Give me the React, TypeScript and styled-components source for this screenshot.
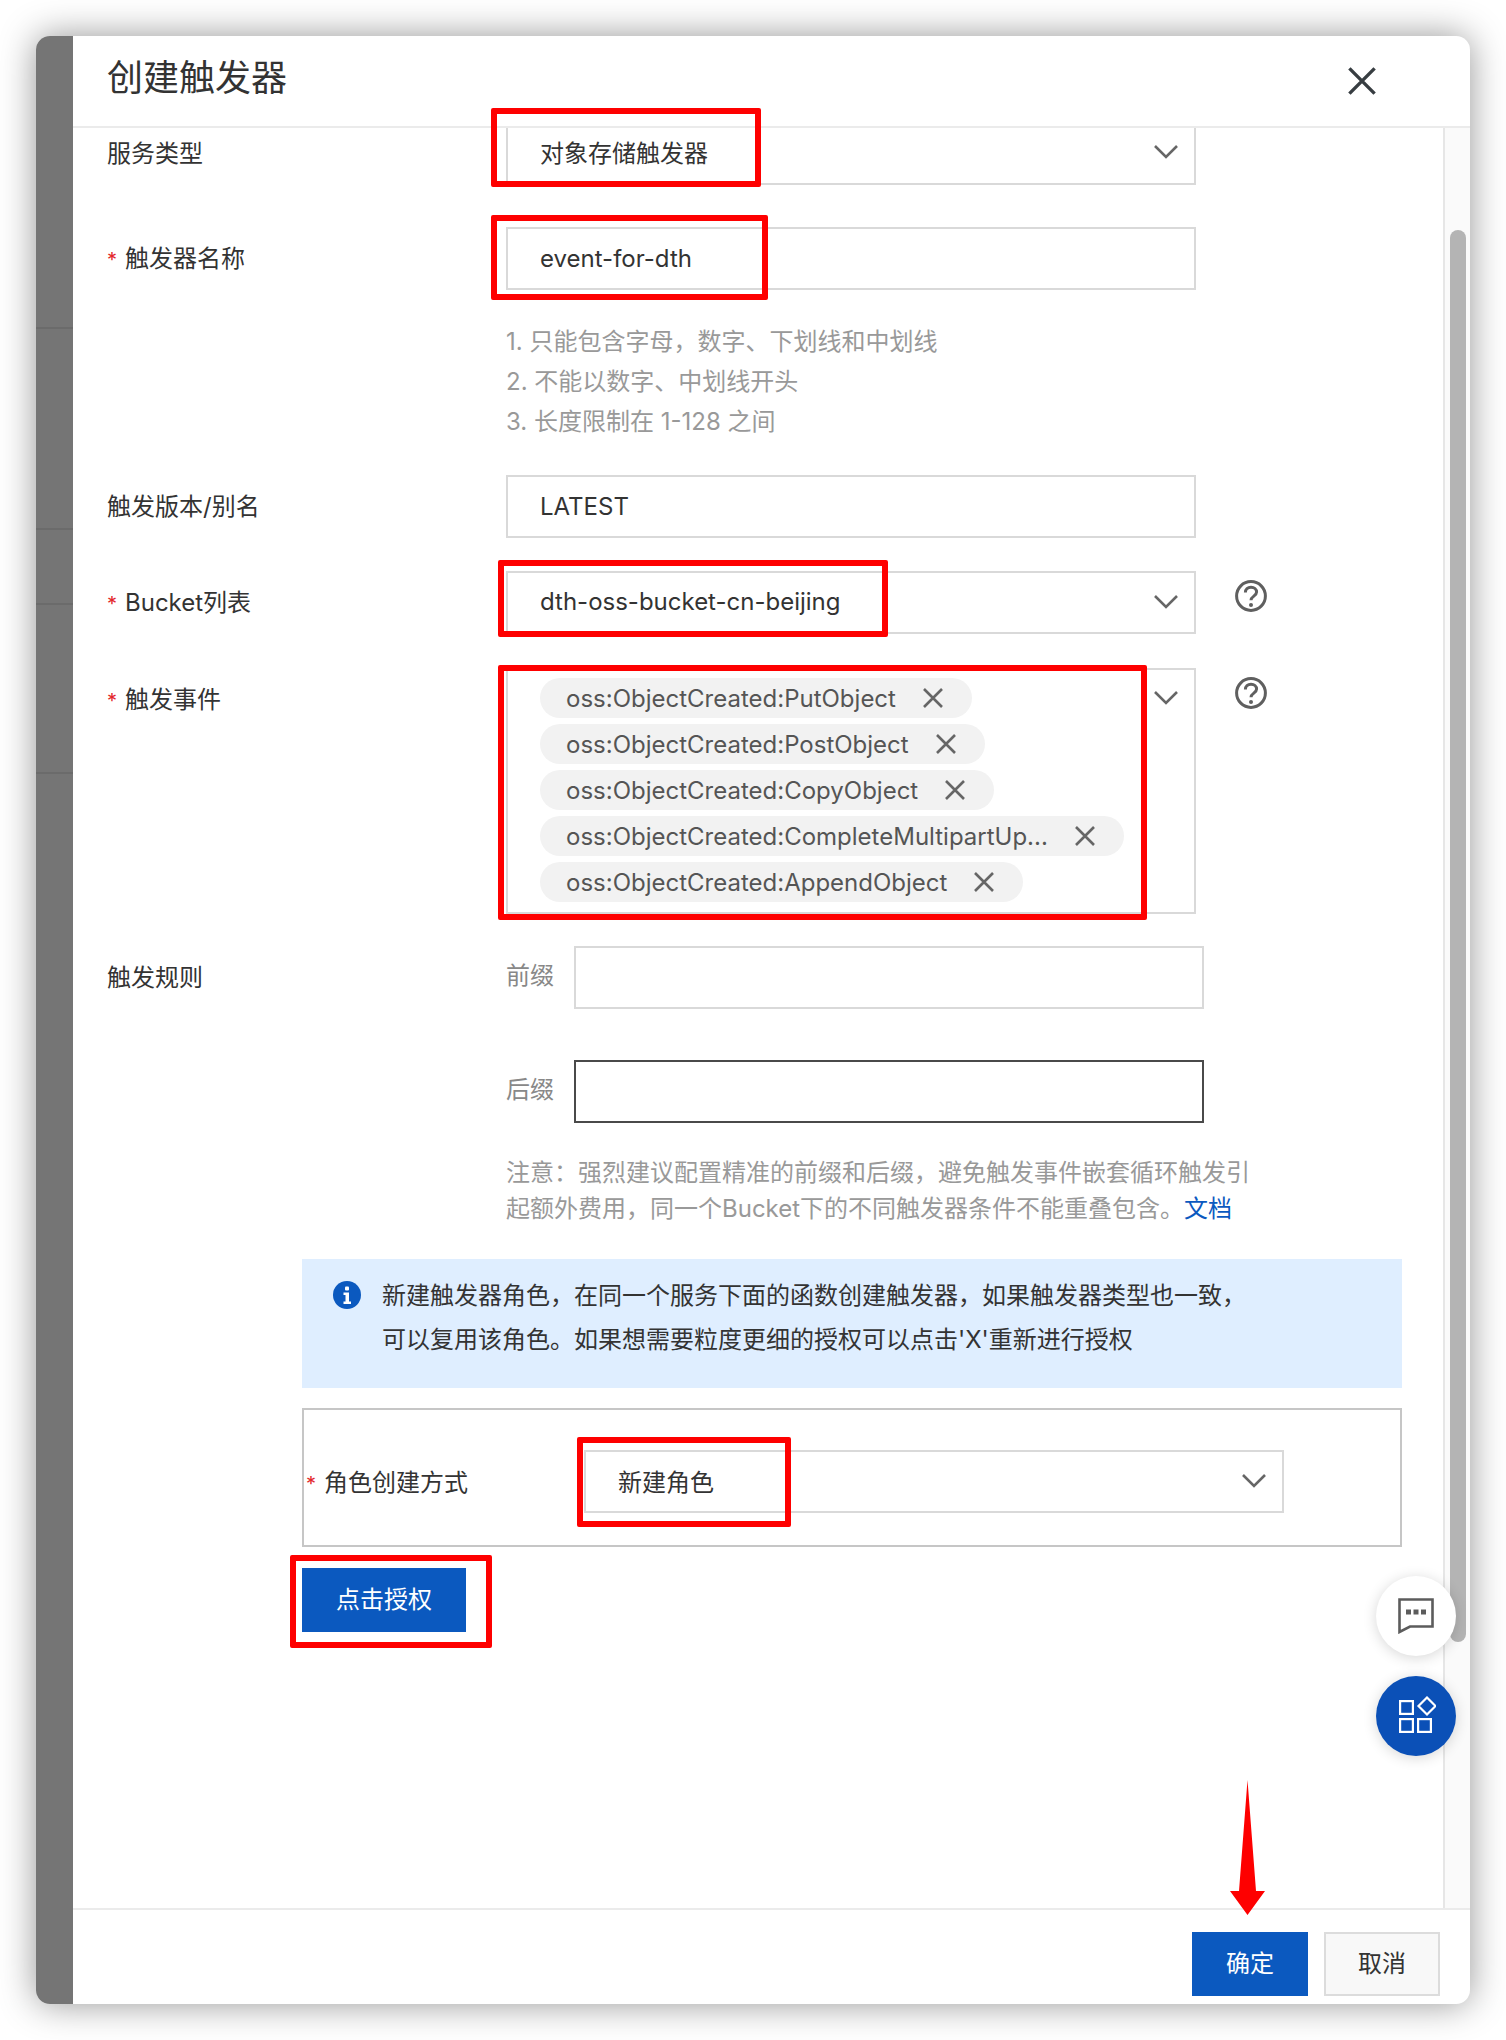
import React from 'react'
import styled, { createGlobalStyle } from 'styled-components'

const fontStack = 'Inter, "Noto Sans CJK SC", sans-serif'

const GlobalStyle = createGlobalStyle`
  html, body { margin: 0; padding: 0; background: #fff; }
  body { font-family: ${fontStack}; color: #333; }
  * { box-sizing: border-box; }
`

const Page = styled.div`
  width: 1506px;
  height: 2040px;
  padding: 36px 36px 36px 36px;
`

const Window = styled.div`
  position: relative;
  display: flex;
  width: 1434px;
  height: 1968px;
  border-radius: 14px;
  background: #fff;
  box-shadow: 0 0 36px rgba(0, 0, 0, 0.42);
`

// Faixa cinza da página por trás do painel
const Band = styled.div`
  display: flex;
  flex-direction: column;
  flex: 0 0 37px;
  background: #757575;
  border-radius: 14px 0 0 14px;
  overflow: hidden;
`

const BandRow = styled.div<{ $h: number }>`
  flex: 0 0 ${p => p.$h}px;
  border-bottom: 2px solid #6b6b6b;
`

const Panel = styled.div`
  display: flex;
  flex-direction: column;
  flex: 1;
  min-width: 0;
`

const Header = styled.div`
  display: flex;
  align-items: center;
  justify-content: space-between;
  flex: 0 0 92px;
  padding: 0 94px 4px 34px;
  border-bottom: 2px solid #ebebeb;
`

const Title = styled.h1`
  margin: 0 0 2px;
  font-size: 36px;
  font-weight: 400;
  line-height: 48px;
  color: #333;
`

const CloseButton = styled.span`
  display: flex;
  margin-top: 4px;
`

const Body = styled.div`
  display: flex;
  flex: 1;
  min-height: 0;
`

const Content = styled.div`
  flex: 1;
  min-width: 0;
  padding-left: 34px;
  overflow: hidden;
`

const Track = styled.div`
  flex: 0 0 27px;
  padding: 102px 4px 0 5px;
  background: #fafafa;
  border-left: 2px solid #e6e6e6;
`

const Thumb = styled.div`
  height: 1412px;
  border-radius: 8px;
  background: #b4b4b4;
`

const Row = styled.div<{ $top?: number }>`
  display: grid;
  grid-template-columns: 399px 690px auto;
  margin-top: ${p => p.$top ?? 0}px;
`

const Label = styled.div<{ $line?: number }>`
  font-size: 24px;
  line-height: ${p => p.$line ?? 63}px;
  color: #333;
`

const Star = styled.span`
  display: inline-block;
  width: 18px;
  color: #e3262b;
  font-size: 20px;
`

const Field = styled.div<{ $clipped?: boolean }>`
  display: flex;
  align-items: center;
  justify-content: space-between;
  height: ${p => (p.$clipped ? 57 : 63)}px;
  padding: ${p => (p.$clipped ? '0 16px 8px 32px' : '0 16px 2px 32px')};
  border: 2px solid #d9d9d9;
  border-top-width: ${p => (p.$clipped ? 0 : 2)}px;
  font-size: 24px;
  color: #333;
  background: #fff;
`

const TextInput = styled.input<{ $focused?: boolean; $width?: number }>`
  display: block;
  flex: 0 0 auto;
  width: ${p => p.$width ?? 690}px;
  height: 63px;
  padding: 0 32px;
  border: 2px solid ${p => (p.$focused ? '#4a4a4a' : '#d9d9d9')};
  border-radius: 0;
  outline: none;
  font: 24px ${fontStack};
  color: #333;
  background: #fff;
`

const Hints = styled.div`
  margin: 30px 0 0 399px;
  font-size: 24px;
  line-height: 40px;
  color: #999;
`

const HelpSlot = styled.span`
  display: flex;
  margin: 9px 0 0 39px;
`

const MultiField = styled.div`
  position: relative;
  display: flex;
  flex-direction: column;
  align-items: flex-start;
  gap: 6px;
  height: 246px;
  padding: 8px 0 0 32px;
  border: 2px solid #d9d9d9;
`

const MultiChevron = styled.span`
  position: absolute;
  top: 21px;
  right: 16px;
  display: flex;
`

const Chip = styled.div`
  display: inline-flex;
  align-items: center;
  height: 40px;
  padding: 0 29px 0 26px;
  border-radius: 20px;
  background: #f2f2f2;
  font-size: 24px;
  color: #555;
  white-space: nowrap;
`

const ChipClose = styled.span`
  display: flex;
  margin-left: 27px;
`

const RuleRow = styled.div<{ $top?: number; $inline?: boolean }>`
  display: flex;
  margin: ${p => p.$top ?? 0}px 0 0 ${p => (p.$inline ? 0 : 399)}px;
`

const RuleLabel = styled.div`
  flex: 0 0 68px;
  font-size: 24px;
  line-height: 60px;
  color: #888;
`

const Note = styled.div`
  margin: 32px 0 0 399px;
  font-size: 24px;
  line-height: 36px;
  color: #999;

  a {
    color: #0b59bf;
    text-decoration: none;
  }
`

const InfoBox = styled.div`
  display: flex;
  gap: 21px;
  width: 1100px;
  height: 129px;
  margin: 32px 0 0 195px;
  padding: 15px 0 0 31px;
  background: #dfeeff;
`

const InfoIcon = styled.span`
  display: flex;
  margin-top: 7px;
`

const InfoText = styled.div`
  font-size: 24px;
  line-height: 44px;
  color: #333;
`

const RoleBox = styled.div`
  display: flex;
  align-items: center;
  width: 1100px;
  height: 139px;
  margin: 20px 0 0 195px;
  padding: 8px 0 0 2px;
  border: 2px solid #c6c6c6;
`

const RoleLabel = styled.div`
  flex: 0 0 278px;
  margin-top: -2px;
  font-size: 24px;
  color: #333;
`

const RoleField = styled(Field)`
  width: 700px;
`

const PrimaryButton = styled.button<{ $wide?: boolean }>`
  display: block;
  width: ${p => (p.$wide ? 116 : 164)}px;
  height: 64px;
  padding: 0 0 5px;
  border: none;
  border-radius: 0;
  background: #0b59bf;
  color: #fff;
  font: 24px ${fontStack};
`

const AuthButton = styled(PrimaryButton)`
  margin: 21px 0 0 195px;
`

const Footer = styled.div`
  display: flex;
  justify-content: flex-end;
  gap: 16px;
  flex: 0 0 96px;
  padding: 22px 30px 0 0;
  border-top: 2px solid #ebebeb;
`

const GhostButton = styled.button`
  width: 116px;
  height: 64px;
  padding: 0 0 5px;
  border: 2px solid #dcdcdc;
  border-radius: 0;
  background: #f8f8f8;
  color: #333;
  font: 24px ${fontStack};
`

const FloatButton = styled.div<{ $top: number; $blue?: boolean }>`
  position: absolute;
  top: ${p => p.$top}px;
  left: 1340px;
  display: flex;
  align-items: center;
  justify-content: center;
  width: 80px;
  height: 80px;
  border-radius: 50%;
  background: ${p => (p.$blue ? '#0b50b7' : '#fff')};
  box-shadow: 0 2px 14px rgba(0, 0, 0, 0.16);
`

// Marcações vermelhas por cima do formulário
const RedBox = styled.div<{ $x: number; $y: number; $w: number; $h: number }>`
  position: absolute;
  left: ${p => p.$x - 36}px;
  top: ${p => p.$y - 36}px;
  width: ${p => p.$w}px;
  height: ${p => p.$h}px;
  border: 6px solid #fe0000;
  border-radius: 2px;
  pointer-events: none;
`

const Arrow = styled.svg`
  position: absolute;
  left: 1194px;
  top: 1744px;
`

const Chevron = () => (
  <svg width="24" height="14" viewBox="0 0 24 14" fill="none" stroke="#666" strokeWidth="2.6">
    <path d="M1 1l11 11L23 1" />
  </svg>
)

const Cross = ({ size = 20, color = '#666', width = 2.6 }: { size?: number; color?: string; width?: number }) => (
  <svg width={size} height={size} viewBox="0 0 20 20" fill="none" stroke={color} strokeWidth={width * (20 / size)}>
    <path d="M1 1l18 18M19 1L1 19" />
  </svg>
)

const Help = () => (
  <svg width="32" height="32" viewBox="0 0 32 32" fill="none" stroke="#5f5f5f" strokeWidth="3">
    <circle cx="16" cy="16" r="14.4" />
    <path d="M10.4 12.4c0-3.2 2.4-5.2 5.6-5.2s5.6 2 5.6 4.9c0 4-5.6 4-5.6 8.2" />
    <circle cx="16" cy="25" r="2" fill="#5f5f5f" stroke="none" />
  </svg>
)

const chips = [
  'oss:ObjectCreated:PutObject',
  'oss:ObjectCreated:PostObject',
  'oss:ObjectCreated:CopyObject',
  'oss:ObjectCreated:CompleteMultipartUp...',
  'oss:ObjectCreated:AppendObject',
]

const bandRows = [293, 201, 75, 169]

const redBoxes = [
  { x: 491, y: 108, w: 270, h: 79 },
  { x: 491, y: 215, w: 277, h: 85 },
  { x: 498, y: 560, w: 390, h: 77 },
  { x: 498, y: 665, w: 649, h: 255 },
  { x: 577, y: 1437, w: 214, h: 90 },
  { x: 290, y: 1555, w: 202, h: 93 },
]

export default function App() {
  return (
    <Page>
      <GlobalStyle />
      <Window>
        <Band>
          {bandRows.map(h => (
            <BandRow key={h} $h={h} />
          ))}
        </Band>
        <Panel>
          <Header>
            <Title>创建触发器</Title>
            <CloseButton>
              <Cross size={28} color="#373d41" width={3.4} />
            </CloseButton>
          </Header>
          <Body>
            <Content>
              <Row>
                <Label $line={52}>服务类型</Label>
                <Field $clipped>
                  对象存储触发器
                  <Chevron />
                </Field>
              </Row>
              <Row $top={42}>
                <Label><Star>*</Star>触发器名称</Label>
                <TextInput defaultValue="event-for-dth" />
              </Row>
              <Hints>
                1. 只能包含字母，数字、下划线和中划线<br />
                2. 不能以数字、中划线开头<br />
                3. 长度限制在 1-128 之间
              </Hints>
              <Row $top={33}>
                <Label>触发版本/别名</Label>
                <TextInput defaultValue="LATEST" />
              </Row>
              <Row $top={33}>
                <Label><Star>*</Star>Bucket列表</Label>
                <Field>
                  dth-oss-bucket-cn-beijing
                  <Chevron />
                </Field>
                <HelpSlot><Help /></HelpSlot>
              </Row>
              <Row $top={32}>
                <Label><Star>*</Star>触发事件</Label>
                <MultiField>
                  {chips.map(chip => (
                    <Chip key={chip}>
                      {chip}
                      <ChipClose><Cross /></ChipClose>
                    </Chip>
                  ))}
                  <MultiChevron><Chevron /></MultiChevron>
                </MultiField>
                <HelpSlot><Help /></HelpSlot>
              </Row>
              <Row $top={32}>
                <Label>触发规则</Label>
                <RuleRow $inline>
                  <RuleLabel>前缀</RuleLabel>
                  <TextInput $width={630} />
                </RuleRow>
              </Row>
              <RuleRow $top={51}>
                <RuleLabel>后缀</RuleLabel>
                <TextInput $width={630} $focused />
              </RuleRow>
              <Note>
                注意：强烈建议配置精准的前缀和后缀，避免触发事件嵌套循环触发引<br />
                起额外费用，同一个Bucket下的不同触发器条件不能重叠包含。<a href="#doc">文档</a>
              </Note>
              <InfoBox>
                <InfoIcon>
                  <svg width="28" height="28" viewBox="0 0 28 28">
                    <circle cx="14" cy="14" r="14" fill="#0b59bf" />
                    <rect x="12" y="5.5" width="4" height="4" rx="1" fill="#fff" />
                    <path d="M10.5 11.5H16v9h2v2.4h-7.5v-2.4h2v-6.6h-2z" fill="#fff" />
                  </svg>
                </InfoIcon>
                <InfoText>
                  新建触发器角色，在同一个服务下面的函数创建触发器，如果触发器类型也一致，<br />
                  可以复用该角色。如果想需要粒度更细的授权可以点击'X'重新进行授权
                </InfoText>
              </InfoBox>
              <RoleBox>
                <RoleLabel><Star>*</Star>角色创建方式</RoleLabel>
                <RoleField>
                  新建角色
                  <Chevron />
                </RoleField>
              </RoleBox>
              <AuthButton>点击授权</AuthButton>
            </Content>
            <Track>
              <Thumb />
            </Track>
          </Body>
          <Footer>
            <PrimaryButton $wide>确定</PrimaryButton>
            <GhostButton>取消</GhostButton>
          </Footer>
        </Panel>

        <FloatButton $top={1540}>
          <svg width="36" height="36" viewBox="0 0 36 36" fill="none" stroke="#5c5c5c" strokeWidth="2.6">
            <path d="M1.5 1.5h33v27H12L1.5 34z" />
            <path d="M8 14h20" strokeDasharray="5 2.5" strokeWidth="5" />
          </svg>
        </FloatButton>
        <FloatButton $top={1640} $blue>
          <svg width="40" height="40" viewBox="0 0 40 40" fill="none" stroke="#fff" strokeWidth="2.2">
            <rect x="4.1" y="5.1" width="12.8" height="12.8" />
            <rect x="4.1" y="23.1" width="12.8" height="12.8" />
            <rect x="22.1" y="23.1" width="12.8" height="12.8" />
            <path d="M31 1.5l8.5 8.5-8.5 8.5-8.5-8.5z" />
          </svg>
        </FloatButton>

        {redBoxes.map(box => (
          <RedBox key={box.y} $x={box.x} $y={box.y} $w={box.w} $h={box.h} />
        ))}
        <Arrow width="36" height="136" viewBox="0 0 36 136">
          <path d="M17.5 0L9 111H0l17.5 24L35 111h-9z" fill="#fe0000" />
        </Arrow>
      </Window>
    </Page>
  )
}
